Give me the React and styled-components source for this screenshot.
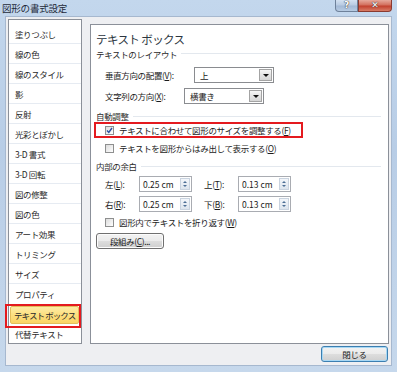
import React from "react";
import styled, { createGlobalStyle } from "styled-components";

const GlobalStyle = createGlobalStyle`
  html, body { margin: 0; padding: 0; }
  body {
    width: 397px;
    height: 372px;
    overflow: hidden;
    font-family: "Noto Sans CJK JP", "Liberation Sans", sans-serif;
    color: #1b1b1b;
  }
`;

// ウィンドウ枠
const Window = styled.div`
  width: 397px;
  height: 372px;
  box-sizing: border-box;
  padding: 0 5px 6px;
  display: flex;
  flex-direction: column;
  background: linear-gradient(180deg, #c3d7ed 0%, #b8cde6 40%, #c6d8ec 100%);
`;

const TitleBar = styled.div`
  height: 16px;
  display: flex;
  align-items: flex-start;
  justify-content: space-between;
`;

const TitleText = styled.span`
  margin: 2px 0 0 -3px;
  font-size: 9.5px;
  line-height: 12px;
  letter-spacing: -0.2px;
  color: #1e2a3a;
`;

const CaptionButtons = styled.div`
  display: flex;
`;

const CaptionButton = styled.div`
  width: ${(p) => p.$w}px;
  height: 12px;
  box-sizing: border-box;
  border: 1px solid ${(p) => (p.$close ? "#8a3a30" : "#6e819a")};
  border-top: none;
  border-radius: ${(p) => (p.$close ? "0 0 4px 0" : "0 0 0 4px")};
  background: ${(p) =>
    p.$close
      ? "linear-gradient(180deg, #e6a99c 0%, #d3705e 45%, #c2412e 55%, #d87c66 100%)"
      : "linear-gradient(180deg, #d3e1f1 0%, #b9cbe2 45%, #a3b9d5 55%, #b7cbe3 100%)"};
  display: flex;
  align-items: center;
  justify-content: center;
  color: #fff;
  font-family: "DejaVu Sans", sans-serif;
  font-weight: bold;
  font-size: 9px;
  line-height: 1;
  text-shadow: 0 0 1px #333, 0 0 1px #333;
`;

const Client = styled.div`
  flex: 1;
  min-height: 0;
  box-sizing: border-box;
  border: 1px solid #a6b8cf;
  background: #eeeff2;
  padding: 2px 2px 3px;
  display: flex;
  flex-direction: column;
`;

const Main = styled.div`
  flex: 1;
  min-height: 0;
  display: flex;
  gap: 8px;
`;

// 左側のカテゴリ一覧
const CategoryList = styled.ul`
  width: 74px;
  box-sizing: border-box;
  margin: 0;
  padding: 4px 0 0;
  list-style: none;
  background: #fff;
  border: 1px solid #8b9099;
`;

const Category = styled.li`
  position: relative;
  height: 20px;
  box-sizing: border-box;
  display: flex;
  align-items: center;
  padding-left: ${(p) => (p.$selected ? 0 : 6)}px;
  font-size: 8.5px;
  letter-spacing: -0.4px;
  white-space: nowrap;
  color: #2a2a2a;
  border-bottom: 1px solid ${(p) => (p.$sep ? "#e6ebf2" : "transparent")};
`;

const SelectedCategory = styled.div`
  position: relative;
  flex: 1;
  height: 18px;
  margin: 2px 2px 0 1px;
  box-sizing: border-box;
  display: flex;
  align-items: center;
  padding-left: 3px;
  letter-spacing: -0.9px;
  border: 1px solid #e2bd5c;
  border-radius: 2px;
  background: linear-gradient(180deg, #fdeca6 0%, #fcdf7f 50%, #fbd464 100%);

  &::after {
    content: "";
    position: absolute;
    left: -6px;
    right: -3px;
    top: -3px;
    bottom: -5px;
    border: 2px solid #e41a1f;
  }
`;

// 右側の設定パネル
const Panel = styled.div`
  flex: 1;
  margin-top: 5px;
  box-sizing: border-box;
  background: #fff;
  border: 1px solid #8b9099;
  padding: 6px 5px 0 5px;
  display: flex;
  flex-direction: column;
  font-size: 8.5px;
  letter-spacing: -0.35px;
  white-space: nowrap;
`;

const PanelTitle = styled.div`
  height: 16px;
  line-height: 16px;
  font-size: 11.5px;
  letter-spacing: -0.6px;
  color: #2c3640;
`;

const SectionHeader = styled.div`
  height: ${(p) => p.$h || 12}px;
  margin-top: ${(p) => p.$mt || 0}px;
  display: flex;
  align-items: center;
  gap: 4px;
  color: #2a2a2a;

  &::after {
    content: "";
    flex: 1;
    height: 1px;
    margin-right: 2px;
    background: #e3e8ee;
  }
`;

const Row = styled.div`
  position: relative;
  height: 16px;
  margin-top: ${(p) => p.$mt || 0}px;
  padding-left: 9px;
  display: flex;
  align-items: center;

  ${(p) =>
    p.$marked &&
    `
    &::after {
      content: "";
      position: absolute;
      left: -2px;
      top: 0;
      width: 209px;
      height: 16px;
      box-sizing: border-box;
      border: 2px solid #e41a1f;
    }
  `}
`;

const Label = styled.span`
  width: ${(p) => p.$w}px;
  flex: none;
`;

const Select = styled.div`
  width: 80px;
  height: 16px;
  box-sizing: border-box;
  border: 1px solid #8a8c90;
  display: flex;
  align-items: center;
  padding-left: 5px;
  background: #fff;
`;

const SelectValue = styled.span`
  flex: 1;
`;

const DropButton = styled.div`
  width: 13px;
  height: 12px;
  margin-right: 1px;
  box-sizing: border-box;
  border: 1px solid #a3a3a3;
  background: linear-gradient(180deg, #f6f6f6 0%, #e4e4e4 50%, #d6d6d6 100%);
  display: flex;
  align-items: center;
  justify-content: center;

  &::before {
    content: "";
    border-left: 3px solid transparent;
    border-right: 3px solid transparent;
    border-top: 3px solid #111;
  }
`;

const Spin = styled.div`
  width: 53px;
  height: 16px;
  box-sizing: border-box;
  border: 1px solid #a9acb2;
  display: flex;
  align-items: center;
  padding-left: 3px;
  background: #fff;
  letter-spacing: 0;
`;

const SpinValue = styled.span`
  flex: 1;
`;

const SpinArrows = styled.div`
  width: 10px;
  height: 12px;
  margin-right: 1px;
  box-sizing: border-box;
  border: 1px solid #c9d3df;
  background: linear-gradient(180deg, #f3f6fa 0%, #dde5ee 100%);
  display: flex;
  flex-direction: column;
  align-items: center;
  justify-content: space-evenly;
`;

const Arrow = styled.span`
  border-left: 2.5px solid transparent;
  border-right: 2.5px solid transparent;
  ${(p) => (p.$up ? "border-bottom" : "border-top")}: 2.5px solid #4d6f96;
`;

const Gap = styled.span`
  width: ${(p) => p.$w}px;
  flex: none;
`;

const Box = styled.span`
  width: 9px;
  height: 9px;
  margin-right: 5px;
  flex: none;
  box-sizing: border-box;
  border: 1px solid #8e8f8f;
  background: linear-gradient(135deg, #dcdcdc 0%, #f4f4f4 70%, #fff 100%);
  display: flex;
  align-items: center;
  justify-content: center;
`;

const PushButton = styled.div`
  width: ${(p) => p.$w}px;
  height: 16px;
  box-sizing: border-box;
  margin-top: ${(p) => p.$mt || 0}px;
  border: 1px solid ${(p) => (p.$default ? "#3c7fb1" : "#707070")};
  border-radius: 3px;
  background: linear-gradient(180deg, #f3f3f3 0%, #ebebeb 48%, #dddddd 52%, #cfcfcf 100%);
  box-shadow: ${(p) => (p.$default ? "inset 0 0 0 1px #a8d8f4" : "inset 0 0 0 1px #fcfcfc")};
  display: flex;
  align-items: center;
  justify-content: center;
  font-size: 8.5px;
  letter-spacing: -0.4px;
  color: #222;
`;

const Footer = styled.div`
  height: 16px;
  margin-top: 2px;
  display: flex;
  justify-content: flex-end;
  padding-right: 1px;
`;

const categories = [
  "塗りつぶし",
  "線の色",
  "線のスタイル",
  "影",
  "反射",
  "光彩とぼかし",
  "3-D 書式",
  "3-D 回転",
  "図の修整",
  "図の色",
  "アート効果",
  "トリミング",
  "サイズ",
  "プロパティ",
  "テキスト ボックス",
  "代替テキスト",
];

const SELECTED = "テキスト ボックス";

function Checkbox({ checked }) {
  return (
    <Box>
      {checked && (
        <svg width="7" height="7" viewBox="0 0 7 7">
          <path d="M1 3.6 L2.8 5.4 L6 1" fill="none" stroke="#2b4fa2" strokeWidth="1.4" />
        </svg>
      )}
    </Box>
  );
}

function SpinBox({ value }) {
  return (
    <Spin>
      <SpinValue>{value}</SpinValue>
      <SpinArrows>
        <Arrow $up />
        <Arrow />
      </SpinArrows>
    </Spin>
  );
}

export default function App() {
  return (
    <>
      <GlobalStyle />
      <Window>
        <TitleBar>
          <TitleText>図形の書式設定</TitleText>
          <CaptionButtons>
            <CaptionButton $w={23}>?</CaptionButton>
            <CaptionButton $w={34} $close>
              ✕
            </CaptionButton>
          </CaptionButtons>
        </TitleBar>

        <Client>
          <Main>
            <CategoryList>
              {categories.map((name, i) =>
                name === SELECTED ? (
                  <Category key={name} $selected>
                    <SelectedCategory>{name}</SelectedCategory>
                  </Category>
                ) : (
                  <Category key={name} $sep={i < categories.length - 1 && i !== 13}>
                    {name}
                  </Category>
                )
              )}
            </CategoryList>

            <Panel>
              <PanelTitle>テキスト ボックス</PanelTitle>
              <SectionHeader $h={13}>テキストのレイアウト</SectionHeader>

              <Row $mt={7}>
                <Label $w={89}>
                  垂直方向の配置(<u>V</u>):
                </Label>
                <Select>
                  <SelectValue>上</SelectValue>
                  <DropButton />
                </Select>
              </Row>
              <Row $mt={5}>
                <Label $w={79}>
                  文字列の方向(<u>X</u>):
                </Label>
                <Select>
                  <SelectValue>横書き</SelectValue>
                  <DropButton />
                </Select>
              </Row>

              <SectionHeader $mt={6}>自動調整</SectionHeader>
              <Row $marked>
                <Checkbox checked />
                テキストに合わせて図形のサイズを調整する(<u>F</u>)
              </Row>
              <Row $mt={2}>
                <Checkbox />
                テキストを図形からはみ出して表示する(<u>O</u>)
              </Row>

              <SectionHeader $mt={4}>内部の余白</SectionHeader>
              <Row $mt={4}>
                <Label $w={34}>
                  左(<u>L</u>):
                </Label>
                <SpinBox value="0.25 cm" />
                <Gap $w={12} />
                <Label $w={34}>
                  上(<u>T</u>):
                </Label>
                <SpinBox value="0.13 cm" />
              </Row>
              <Row $mt={4}>
                <Label $w={34}>
                  右(<u>R</u>):
                </Label>
                <SpinBox value="0.25 cm" />
                <Gap $w={12} />
                <Label $w={34}>
                  下(<u>B</u>):
                </Label>
                <SpinBox value="0.13 cm" />
              </Row>
              <Row $mt={2}>
                <Checkbox />
                図形内でテキストを折り返す(<u>W</u>)
              </Row>

              <PushButton $w={68} $mt={3}>
                段組み(<u>C</u>)...
              </PushButton>
            </Panel>
          </Main>

          <Footer>
            <PushButton $w={67} $default>
              閉じる
            </PushButton>
          </Footer>
        </Client>
      </Window>
    </>
  );
}
